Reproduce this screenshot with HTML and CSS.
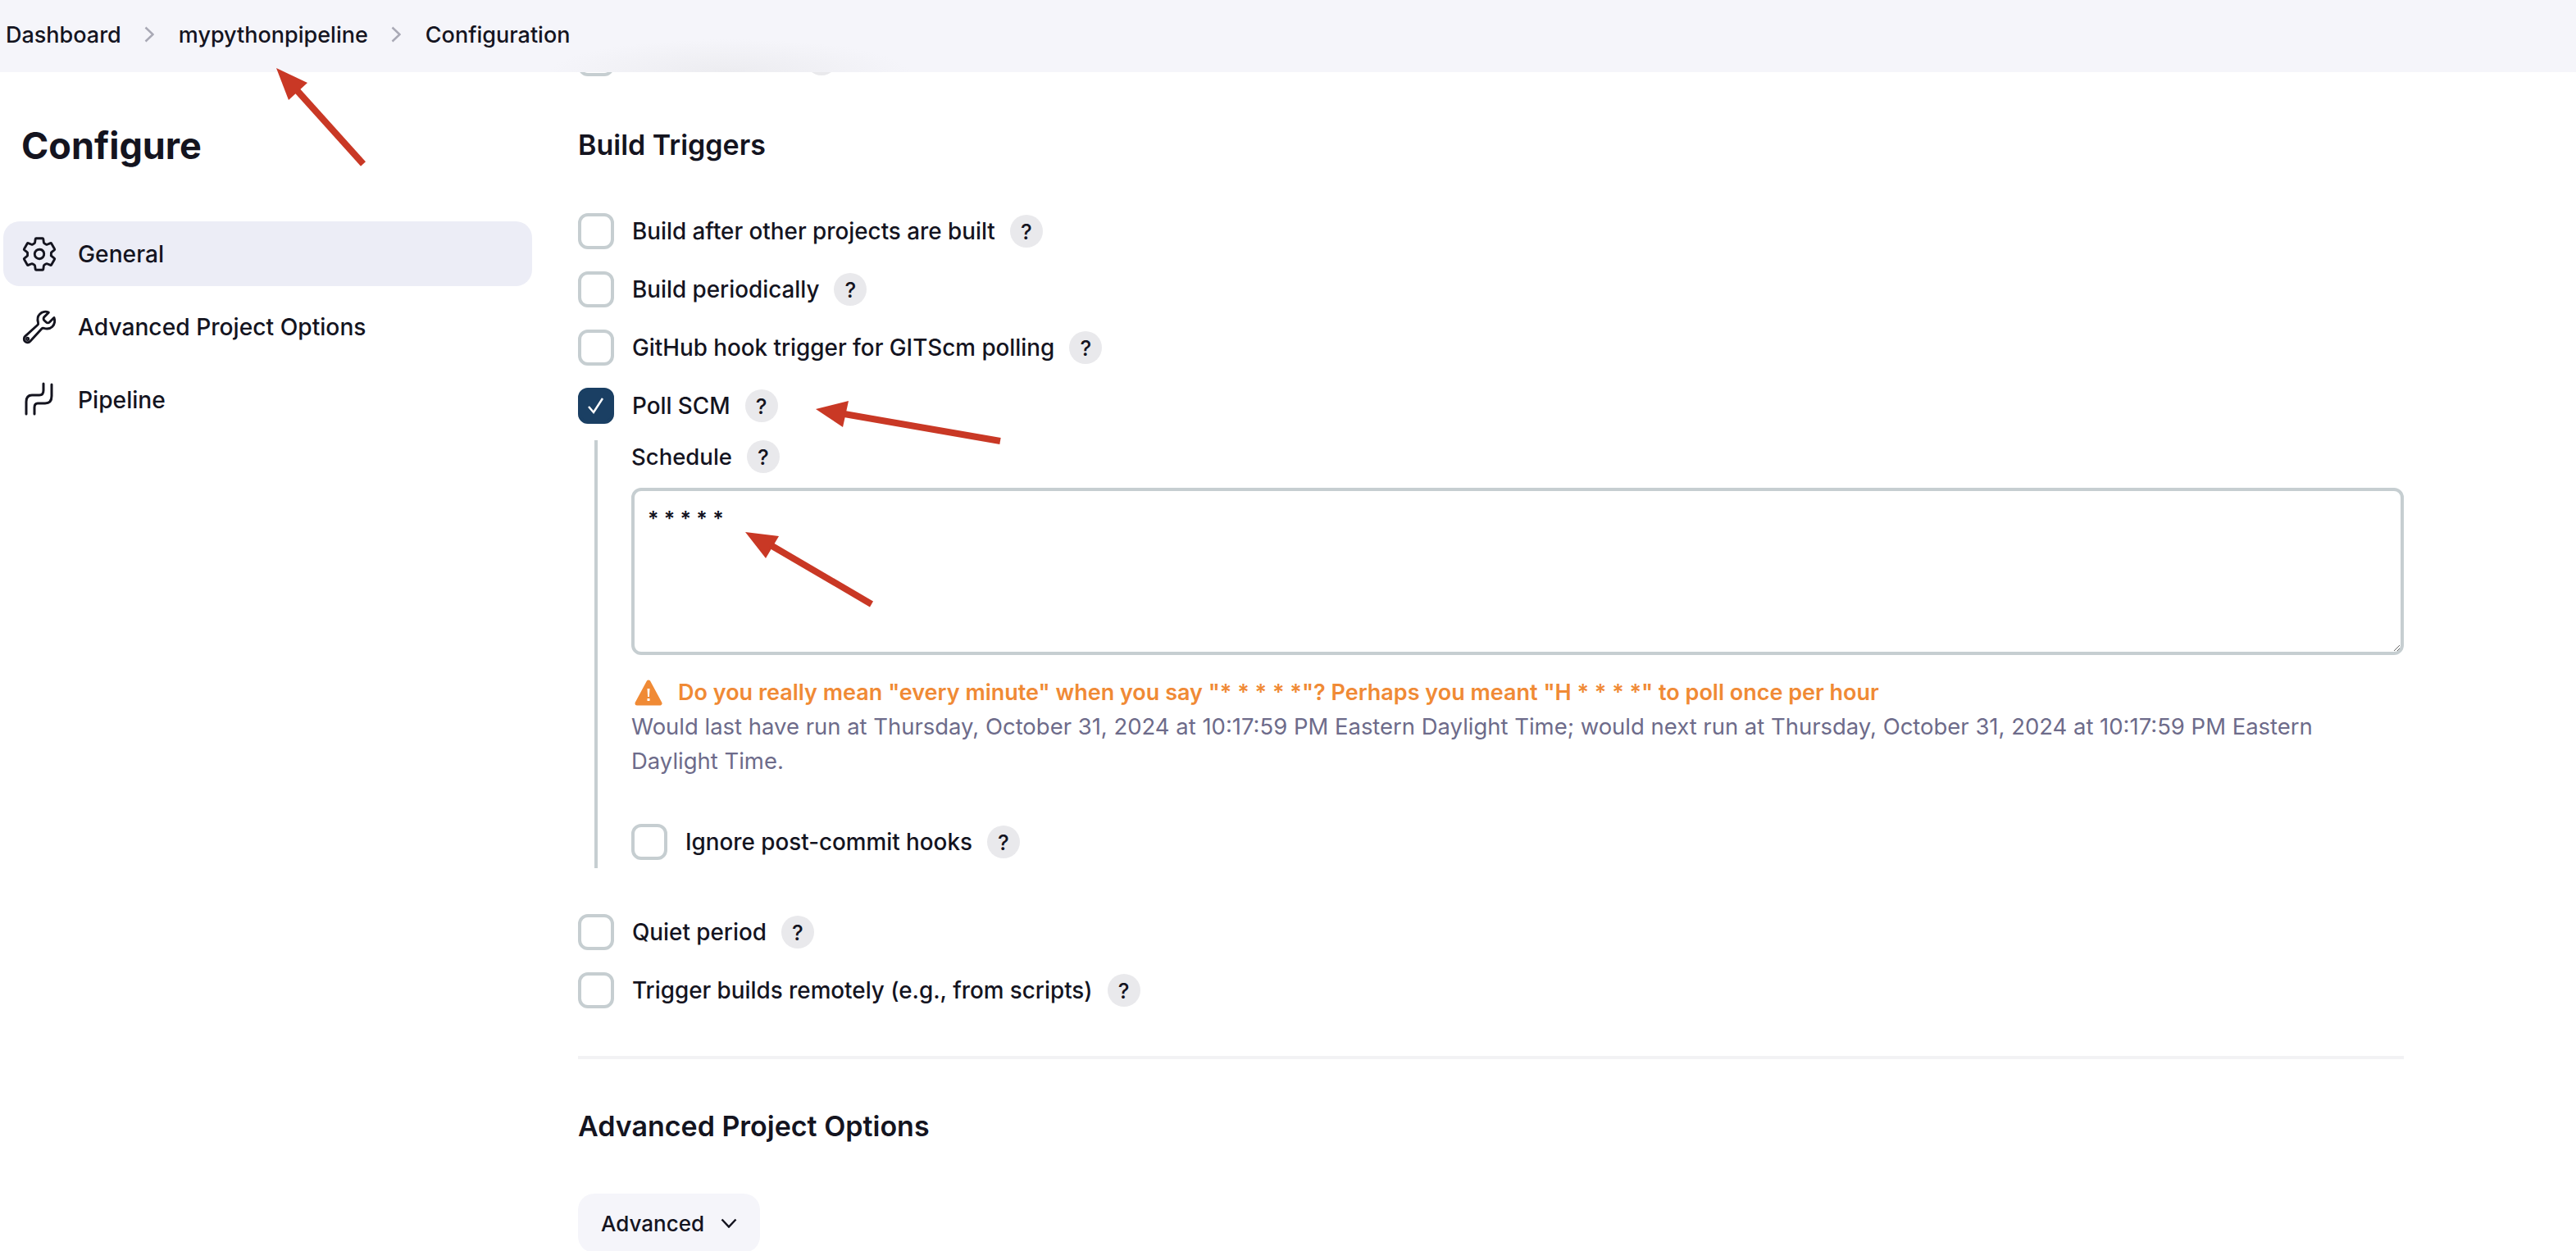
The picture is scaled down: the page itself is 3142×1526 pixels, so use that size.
FILE: index.html
```html
<!DOCTYPE html>
<html lang="en">
  <head>
    <meta charset="UTF-8" />
    <title>mypythonpipeline Config</title>
    <link rel="stylesheet" href="styles.css">
  </head>
  <body>
    <nav class="breadcrumbs">
      <a class="crumb">Dashboard</a>
      <svg class="crumb-sep" viewBox="0 0 12 20"><path d="M1.5 1.5l9 8.5-9 8.5" /></svg>
      <a class="crumb">mypythonpipeline</a>
      <svg class="crumb-sep" viewBox="0 0 12 20"><path d="M1.5 1.5l9 8.5-9 8.5" /></svg>
      <a class="crumb">Configuration</a>
    </nav>

    <div class="layout">
      <aside class="sidebar">
        <h1>Configure</h1>
        <div class="side-item active">
          <svg class="side-icon" viewBox="0 0 512 512"><path d="M262.29 192.31a64 64 0 1057.4 57.4 64.13 64.13 0 00-57.4-57.4zM416.39 256a154.34 154.34 0 01-1.53 20.79l45.21 35.46a10.81 10.81 0 012.45 13.75l-42.77 74a10.81 10.81 0 01-13.14 4.59l-44.9-18.08a16.11 16.11 0 00-15.17 1.75A164.48 164.48 0 01325 400.8a15.94 15.94 0 00-8.82 12.14l-6.73 47.89a11.08 11.08 0 01-10.68 9.17h-85.54a11.11 11.11 0 01-10.69-8.87l-6.72-47.82a16.07 16.07 0 00-9-12.22 155.3 155.3 0 01-21.46-12.57 16 16 0 00-15.11-1.71l-44.89 18.07a10.81 10.81 0 01-13.14-4.58l-42.77-74a10.8 10.8 0 012.45-13.75l38.21-30a16.05 16.05 0 006-14.08c-.36-4.17-.58-8.33-.58-12.5s.21-8.27.58-12.35a16 16 0 00-6.07-13.94l-38.19-30A10.81 10.81 0 0149.48 186l42.77-74a10.81 10.81 0 0113.14-4.59l44.9 18.08a16.11 16.11 0 0015.17-1.75A164.48 164.48 0 01187 111.2a15.94 15.94 0 008.82-12.14l6.73-47.89A11.08 11.08 0 01213.23 42h85.54a11.11 11.11 0 0110.69 8.87l6.72 47.82a16.07 16.07 0 009 12.22 155.3 155.3 0 0121.46 12.57 16 16 0 0015.11 1.71l44.89-18.07a10.81 10.81 0 0113.14 4.58l42.77 74a10.8 10.8 0 01-2.45 13.75l-38.21 30a16.05 16.05 0 00-6.05 14.08c.33 4.14.55 8.3.55 12.47z" /></svg>
          General
        </div>
        <div class="side-item">
          <svg class="side-icon" viewBox="0 0 512 512"><path d="M393.87 190a32.1 32.1 0 01-45.25 0l-26.57-26.57a32.09 32.09 0 010-45.26L382.19 58a1 1 0 00-.3-1.64c-38.82-16.64-89.15-8.16-121.11 23.57-30.58 30.35-32.32 76-21.12 115.84a31.93 31.93 0 01-9.06 32.08L64 380a48.17 48.17 0 1068 68l153.33-167.44a31.93 31.93 0 0131.56-9.06c39.64 10.72 84.9 8.86 115.14-21.06 33.21-32.7 40.37-85.9 24.46-122.63a1 1 0 00-1.64-.3z" /><circle cx="96" cy="416" r="16" /></svg>
          Advanced Project Options
        </div>
        <div class="side-item">
          <svg class="side-icon" viewBox="0 0 46 46"><path d="M38 4v14c0 6-3 9-8 9h-9c-3 0-4 2-4 5v8" /><path d="M28 3v8c0 4-2 6-5 6H14c-5 0-7 3-7 8v15" /></svg>
          Pipeline
        </div>
      </aside>

      <main class="content">
        <div class="peek">
          <span class="check"></span>
          <span class="peek-name"></span>
          <span class="help"></span>
        </div>

        <h2 class="section-title">Build Triggers</h2>

        <div class="rows">
          <div class="row"><span class="check"></span><span class="row-label">Build after other projects are built</span><span class="help">?</span></div>
          <div class="row"><span class="check"></span><span class="row-label">Build periodically</span><span class="help">?</span></div>
          <div class="row"><span class="check"></span><span class="row-label">GitHub hook trigger for GITScm polling</span><span class="help">?</span></div>
          <div class="row">
            <span class="check checked"><svg viewBox="0 0 24 24"><path d="M3 13l6 7L20 3" /></svg></span>
            <span class="row-label">Poll SCM</span><span class="help">?</span>
          </div>
        </div>

        <div class="nested">
          <div class="field-label">Schedule <span class="help">?</span></div>
          <div class="schedule">
            <textarea class="schedule-input" spellcheck="false">* * * * *</textarea>
          </div>
          <div class="warning">
            <svg class="warning-icon" viewBox="0 0 34 32"><path class="warning-bg" d="M17 3L31 29H3z" /><path d="M15.5 11h3l-.6 10h-1.800zM15.500 23h3v3h-3z" fill="#fff" /></svg>
            Do you really mean "every minute" when you say "* * * * *"? Perhaps you meant "H * * * *" to poll once per hour
          </div>
          <div class="note">Would last have run at Thursday, October 31, 2024 at 10:17:59 PM Eastern Daylight Time; would next run at Thursday, October 31, 2024 at 10:17:59 PM Eastern Daylight Time.</div>
          <div class="row ignore-row"><span class="check"></span><span class="row-label">Ignore post-commit hooks</span><span class="help">?</span></div>
        </div>

        <div class="rows">
          <div class="row"><span class="check"></span><span class="row-label">Quiet period</span><span class="help">?</span></div>
          <div class="row"><span class="check"></span><span class="row-label">Trigger builds remotely (e.g., from scripts)</span><span class="help">?</span></div>
        </div>

        <hr class="divider" />

        <h2 class="section-title advanced-title">Advanced Project Options</h2>

        <button class="advanced-btn">
          Advanced
          <svg viewBox="0 0 20 12"><path d="M1.500 1.500l8.500 9 8.500-9" /></svg>
        </button>
      </main>
    </div>

    <!-- red annotation arrows drawn over the screenshot -->
    <svg class="arrows" viewBox="0 0 3142 1526">
      <g>
        <polygon points="337,83 375,101 352,122" />
        <line x1="362" y1="110" x2="443" y2="200" />
        <polygon points="995,499 1035,489 1028,521" />
        <line x1="1030" y1="505" x2="1220" y2="538" />
        <polygon points="909,649 950,654 934,681" />
        <line x1="940" y1="665" x2="1063" y2="737" />
      </g>
    </svg>
  </body>
</html>
```

FILE: styles.css
```css
* {
  margin: 0;
  padding: 0;
  box-sizing: border-box;
}

html,
body {
  height: 1526px;
  overflow: hidden;
}

body {
  font-family: Inter, "Liberation Sans", sans-serif;
  font-size: 27.800px;
  font-weight: 500;
  color: #14141f;
  background-color: #fff;
  position: relative;
}

.breadcrumbs {
  display: flex;
  align-items: center;
  height: 88px;
  padding: 0 0 4px 7px;
  font-size: 27px;
  background: radial-gradient(ellipse 220px 40px at 890px 100%, #ececf0, transparent), #f5f5fa;
  position: relative;
  z-index: 2;
}

.crumb {
  color: #14141f;
}

.crumb-sep {
  width: 12px;
  height: 20px;
  margin: 0 30px 0 28px;
}

.crumb-sep path {
  fill: none;
  stroke: #a9a9b5;
  stroke-width: 2.500;
}

.layout {
  display: flex;
}

.sidebar {
  width: 705px;
  flex-shrink: 0;
  padding-left: 4px;
}

.sidebar h1 {
  font-size: 45px;
  font-weight: 700;
  line-height: 60px;
  padding: 60px 0 0 22px;
  margin-bottom: 62px;
}

.side-item {
  display: flex;
  align-items: center;
  gap: 24px;
  width: 645px;
  height: 79px;
  margin-bottom: 10px;
  padding-left: 21px;
  border-radius: 20px;
  font-size: 28.200px;
}

.side-item.active {
  background-color: #ecedf6;
}

.side-icon {
  width: 46px;
  height: 46px;
  flex-shrink: 0;
  fill: none;
  stroke: #14141f;
  stroke-width: 32;
  stroke-linecap: round;
  stroke-linejoin: round;
}

.side-item:last-child .side-icon {
  stroke-width: 3;
}

.side-icon circle {
  stroke-width: 24;
}

.content {
  width: 2227px;
}

.peek {
  display: flex;
  align-items: flex-end;
  height: 5px;
  overflow: hidden;
  gap: 20px;
}

.peek-name {
  width: 175px;
}

.peek .help {
  margin-bottom: 1px;
}

.section-title {
  font-size: 34px;
  font-weight: 600;
  line-height: 44px;
  margin-top: 62px;
}

.rows {
  display: flex;
  flex-direction: column;
  gap: 27px;
}

.section-title + .rows {
  margin-top: 61px;
}

.row {
  display: flex;
  align-items: center;
  height: 44px;
}

.check {
  display: flex;
  align-items: center;
  justify-content: center;
  width: 44px;
  height: 44px;
  flex-shrink: 0;
  border: 4px solid #c6ced1;
  border-radius: 12px;
  background-color: #fff;
}

.check.checked {
  background-color: #1a3f63;
  border-color: #1a3f63;
}

.check svg {
  width: 24px;
  height: 24px;
  flex-shrink: 0;
  fill: none;
  stroke: #fff;
  stroke-width: 2.500;
}

.row-label {
  margin-left: 22px;
}

.help {
  display: inline-flex;
  align-items: center;
  justify-content: center;
  width: 40px;
  height: 40px;
  margin-left: 18px;
  flex-shrink: 0;
  border-radius: 50%;
  background-color: #e9e9ec;
  font-size: 26px;
  font-weight: 500;
}

.nested {
  margin: 20px 0 56px 20px;
  padding-left: 41px;
  border-left: 4px solid #c6ced1;
}

.field-label {
  display: flex;
  align-items: center;
  height: 40px;
  font-size: 27.500px;
}

.schedule {
  margin-top: 18px;
}

.schedule-input {
  display: block;
  width: 100%;
  height: 204px;
  padding: 19px 16px;
  border: 4px solid #c6ced1;
  border-radius: 12px;
  font-family: Inter, sans-serif;
  font-size: 25px;
  font-weight: 600;
  color: #14141f;
  outline: none;
}

.warning {
  display: flex;
  align-items: center;
  gap: 19px;
  margin-top: 29px;
  padding-left: 4px;
  font-size: 27px;
  font-weight: 600;
  color: #f08a35;
}

.warning-icon {
  width: 34px;
  height: 32px;
}

.warning-bg {
  fill: #f08a35;
  stroke: #f08a35;
  stroke-width: 5;
  stroke-linejoin: round;
}

.note {
  margin-top: 4px;
  font-size: 27.460px;
  line-height: 42px;
  color: #6d6b8a;
  font-weight: 400;
}

.ignore-row {
  margin-top: 56px;
  padding-bottom: 10px;
  height: auto;
}

.divider {
  margin-top: 58px;
  border: none;
  border-top: 4px solid #f2f2f4;
}

.section-title.advanced-title {
  margin-top: 60px;
}

.advanced-btn {
  display: flex;
  align-items: center;
  gap: 20px;
  height: 72px;
  margin-top: 60px;
  padding: 0 28px;
  border: none;
  border-radius: 20px;
  background-color: #f5f5fa;
  font: inherit;
  font-size: 26px;
  color: #14141f;
}

.advanced-btn svg {
  width: 20px;
  height: 12px;
  fill: none;
  stroke: #14141f;
  stroke-width: 2.500;
}

.arrows {
  position: absolute;
  top: 0;
  left: 0;
  width: 3142px;
  height: 1526px;
  z-index: 3;
  pointer-events: none;
}

.arrows polygon {
  fill: #c93825;
}

.arrows line {
  stroke: #c93825;
  stroke-width: 8;
}
```
